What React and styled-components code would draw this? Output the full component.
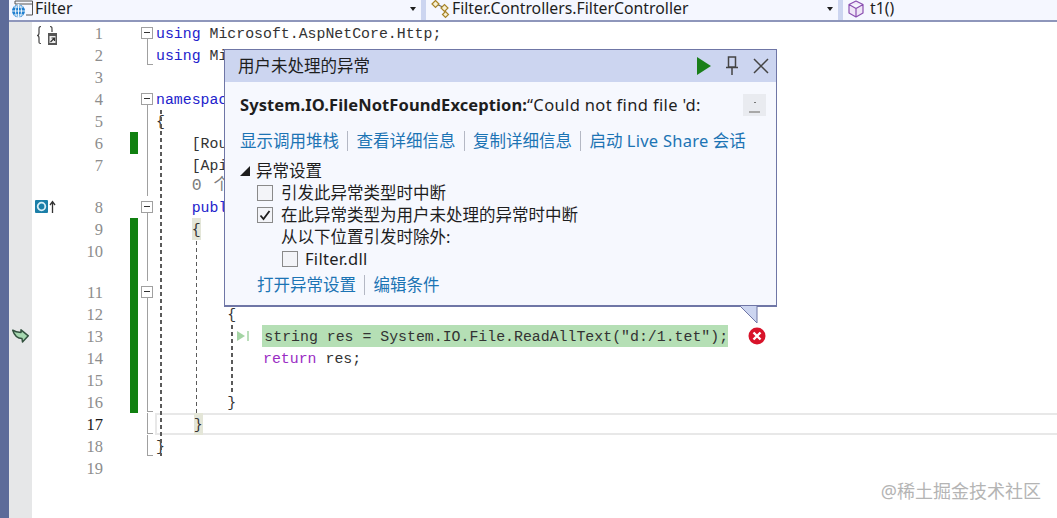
import React from "react";
import styled, { createGlobalStyle } from "styled-components";

const GlobalStyle = createGlobalStyle`
  html, body { margin: 0; padding: 0; height: 100%; background: #fff; overflow: hidden; }
  #root { height: 100%; }
`;

const UI_FONT = `"Noto Sans", "Noto Sans CJK SC", sans-serif`;
const CODE_FONT = `"Liberation Mono", "Noto Sans CJK SC", monospace`;
const CHAR = 8.92;

const Page = styled.div`
  position: relative;
  display: flex;
  width: 1057px;
  height: 518px;
  overflow: hidden;
  background: #fff;
`;
const Strip = styled.div`
  width: 9px;
  background: #5d6b99;
  flex: none;
`;
const Main = styled.div`
  flex: 1;
  display: flex;
  flex-direction: column;
  min-width: 0;
`;

const NavBar = styled.div`
  display: flex;
  flex: none;
  height: 20px;
  gap: 5px;
  background: #ccd5f0;
  border-bottom: 2px solid #8e96bb;
  overflow: hidden;
`;
const NavBox = styled.div`
  display: flex;
  align-items: center;
  width: ${(p) => p.$width}px;
  flex: none;
  height: 20px;
  background: #f5f7ff;
  font: 15.8px/16px ${UI_FONT};
  color: #1e1e1e;
  box-sizing: border-box;
  padding-left: ${(p) => p.$pad}px;
  padding-bottom: 4px;
  position: relative;
  white-space: nowrap;
`;
const NavIcon = styled.svg`
  flex: none;
  align-self: flex-start;
  margin-bottom: -4px;
  margin-right: ${(p) => p.$gap}px;
`;
const Caret = styled.i`
  position: absolute;
  right: 5px;
  top: 7px;
  border-left: 3.5px solid transparent;
  border-right: 3.5px solid transparent;
  border-top: 4px solid #1e1e1e;
`;

const Editor = styled.div`
  position: relative;
  flex: 1;
  display: flex;
  flex-direction: column;
  min-height: 0;
`;
const Row = styled.div`
  display: flex;
  flex: ${(p) => (p.$fill ? "1" : "none")};
  height: ${(p) => (p.$fill ? "auto" : `${p.$h || 22}px`)};
`;
const Margin = styled.div`
  flex: none;
  width: 23px;
  background: #e6e7e8;
  display: flex;
  align-items: center;
  justify-content: center;
`;
const Glyph = styled.div`
  flex: none;
  width: 30px;
  display: flex;
  align-items: center;
  padding-left: 3px;
  box-sizing: border-box;
`;
const LineNo = styled.div`
  flex: none;
  width: 41px;
  text-align: right;
  font: 16.5px/24px "Liberation Serif", serif;
  color: ${(p) => (p.$current ? "#1a1a1a" : "#8d8d8d")};
`;
const ChangeCol = styled.div`
  flex: none;
  width: 8px;
  margin-left: 27px;
  background: ${(p) => (p.$on ? "#108010" : "transparent")};
`;
const Fold = styled.div`
  flex: none;
  position: relative;
  width: 12px;
  margin-left: 3px;

  &::before {
    content: "";
    display: ${(p) => (p.$kind ? "block" : "none")};
    position: absolute;
    left: 6px;
    top: ${(p) => (p.$kind === "open" ? "11px" : "0")};
    bottom: ${(p) => (p.$kind === "end" ? "1px" : "0")};
    width: 1px;
    background: #a0a0a0;
    ${(p) => p.$kind === "end" && "width: 6px; background: none; border-left: 1px solid #a0a0a0; border-bottom: 1px solid #a0a0a0; box-sizing: border-box;"}
  }
`;
const FoldBox = styled.span`
  position: absolute;
  left: 0;
  top: 5px;
  width: 12px;
  height: 12px;
  box-sizing: border-box;
  background: #fff;
  border: 1px solid #a0a0a0;

  &::after {
    content: "";
    position: absolute;
    left: 2px;
    right: 2px;
    top: 4px;
    height: 1px;
    background: #333;
  }
`;
const Code = styled.div`
  flex: 1;
  min-width: 0;
  display: flex;
  align-items: flex-start;
  margin-left: ${(p) => (p.$current ? "2px" : "3px")};
  padding-left: ${(p) => p.$indent * 4 * CHAR + (p.$current ? 1 : 0)}px;
  box-sizing: border-box;
  font: 14.87px/24px ${CODE_FONT};
  color: #333;
  white-space: pre;
  ${(p) =>
    p.$current &&
    "border-top: 2px solid #e8e8e8; border-bottom: 2px solid #e8e8e8; border-left: 2px solid #e8e8e8; line-height: 20px;"}
`;
const Keyword = styled.span`
  color: ${(p) => (p.$flow ? "#9a2cc4" : "#2222cc")};
`;
const Brace = styled.span`
  display: block;
  height: 22px;
  line-height: 24px;
  margin-top: ${(p) => (p.$current ? "-2px" : "0")};
  background: #e4e6d8;
`;
const Lens = styled.span`
  font: 16.5px/19px ${CODE_FONT};
  color: #7d7d7d;
  word-spacing: 2px;
`;
const Active = styled.span`
  display: block;
  height: 22px;
  line-height: 24px;
  background: #b5dfb5;
  margin-left: -2px;
  padding-left: 2px;
`;
const RunMark = styled.svg`
  flex: none;
  align-self: center;
  width: 36px;
  height: 12px;
  margin-left: 10px;
  margin-right: -9px;
`;
const ErrorMark = styled.svg`
  flex: none;
  align-self: center;
  margin-left: 20px;
`;
const IconSvg = styled.svg`
  overflow: visible;
`;

const Guide = styled.i`
  position: absolute;
  left: ${(p) => p.$x}px;
  top: ${(p) => p.$top}px;
  height: ${(p) => p.$h}px;
  width: 1.5px;
  background: repeating-linear-gradient(#5a5a5a 0 4px, transparent 4px 7px);
`;

const Popup = styled.div`
  position: absolute;
  left: 224px;
  top: 49px;
  width: 553px;
  height: 258px;
  box-sizing: border-box;
  border: 1px solid #6f76a6;
  border-bottom-width: 2px;
  background: #f6f8fe;
  font: 16.5px/22px ${UI_FONT};
  color: #1e1e1e;
  display: flex;
  flex-direction: column;
`;
const TitleBar = styled.div`
  flex: none;
  height: 32px;
  background: #ccd5f0;
  display: flex;
  align-items: center;
  padding: 0 7px 0 13px;
  gap: 14px;
`;
const Title = styled.div`
  flex: 1;
`;
const Message = styled.div`
  display: flex;
  align-items: center;
  height: 24px;
  margin: 11px 10px 0 15px;
  justify-content: space-between;
  white-space: nowrap;
`;
const Bold = styled.b`
  font-weight: 700;
  letter-spacing: 0.1px;
`;
const Latin = styled.span`
  letter-spacing: ${(p) => p.$spacing}px;
`;
const CopyBtn = styled.div`
  width: 23px;
  height: 22px;
  background: #e9ebf0;
  position: relative;

  &::before {
    content: "";
    position: absolute;
    left: 11px;
    top: 8px;
    width: 2px;
    height: 1px;
    background: #777;
  }

  &::after {
    content: "";
    position: absolute;
    left: 6px;
    right: 6px;
    bottom: 3px;
    height: 2px;
    background: #a8a8a8;
  }
`;
const LinkRow = styled.div`
  display: flex;
  align-items: center;
  height: 22px;
  margin: ${(p) => p.$top}px 0 0 ${(p) => p.$left}px;
  color: #1c74b4;
  white-space: nowrap;
`;
const LinkItem = styled.span`
  padding-right: 8px;
  margin-right: 8.5px;
  border-right: 1px solid #b4b8c4;
  line-height: 20px;

  &:last-child {
    border-right: none;
  }
`;
const Section = styled.div`
  display: flex;
  align-items: center;
  height: 22px;
  margin: ${(p) => p.$top || 0}px 0 0 ${(p) => p.$left}px;
  white-space: nowrap;
`;
const Triangle = styled.i`
  width: 0;
  height: 0;
  margin-right: 6px;
  border-style: solid;
  border-width: 0 0 10px 10px;
  border-color: transparent transparent #1e1e1e transparent;
`;
const Box = styled.span`
  flex: none;
  width: 16px;
  height: 16px;
  box-sizing: border-box;
  margin-right: ${(p) => p.$gap}px;
  border: 1px solid #8a8a8a;
  background: #f3f4f8;
  display: flex;
  align-items: center;
  justify-content: center;
`;
const Tail = styled.svg`
  position: absolute;
  left: 739px;
  top: 306px;
`;
const Watermark = styled.div`
  position: absolute;
  right: 16px;
  bottom: 16px;
  font: 18px/22px ${UI_FONT};
  color: #b4b4b4;
  white-space: nowrap;
`;

const GlobeIcon = () => (
  <NavIcon $gap={2} width="21" height="20" viewBox="0 0 21 20">
    <path d="M3 1h17.500v14H14M3 4h17.500" fill="none" stroke="#555" strokeWidth="1" />
    <path d="M3 1v3" stroke="#555" />
    <circle cx="6.500" cy="11" r="6.500" fill="#1f7fd0" />
    <path d="M0 11h13M6.500 4.500v13M2 7h9M2 15h9" stroke="#fff" strokeWidth=".9" />
    <ellipse cx="6.500" cy="11" rx="3" ry="6.500" fill="none" stroke="#fff" strokeWidth=".9" />
  </NavIcon>
);

const ClassIcon = () => (
  <NavIcon $gap={2} width="21" height="20" viewBox="0 0 21 20">
    <path d="M7 4l9 4M16 8l1 7" fill="none" stroke="#666" strokeWidth="1.200" />
    <g fill="#f7f0d4" stroke="#a88428" strokeWidth="1.200">
      <path d="M3 4l3.500-3.500L10 4 6.500 7.500z" />
      <path d="M12 8l3.500-3.500L19 8l-3.500 3.500z" />
      <path d="M13.500 14.500l3-3 3 3-3 3z" />
    </g>
  </NavIcon>
);

const CubeIcon = () => (
  <NavIcon $gap={5} width="18" height="18" viewBox="0 0 18 18">
    <path
      d="M9 1l7 3.500v8.500l-7 4-7-4V4.500zM2 4.500l7 4 7-4M9 8.500V17"
      fill="#efe6f7"
      stroke="#8a4fb0"
      strokeWidth="1.200"
      strokeLinejoin="round"
    />
  </NavIcon>
);

const ShortcutBraces = () => (
  <IconSvg width="22" height="22" viewBox="0 0 22 22">
    <path
      d="M6 4.500C4 4.500 4 5.500 4 8v3c0 2-1 2.500-2 2.500 1 0 2 .5 2 2.500v3c0 2 0 2.500 2 2.500"
      fill="none"
      stroke="#444"
      strokeWidth="1.200"
    />
    <path d="M15 4.500c2 0 2 1 2 3.500v2" fill="none" stroke="#444" strokeWidth="1.200" />
    <rect x="13" y="11" width="9" height="12" fill="#555" />
    <rect x="14.500" y="14" width="6" height="7" fill="#eee" />
    <path d="M15.500 20l4-4M16.500 16h3v3" stroke="#333" fill="none" strokeWidth="1.200" />
  </IconSvg>
);

const TrackerIcon = () => (
  <svg width="22" height="14" viewBox="0 0 22 14">
    <rect x="0" y="0" width="13" height="13" rx="1" fill="#1c7fa8" />
    <circle cx="6.500" cy="6.500" r="3.800" fill="none" stroke="#d8eef6" strokeWidth="1.800" />
    <path d="M17.500 13V2M15 5l2.500-3.500L20 5" fill="none" stroke="#333" strokeWidth="1.300" />
  </svg>
);

const NextArrow = () => (
  <svg width="17" height="14" viewBox="0 0 17 14">
    <path
      d="M.7 1.200C3 3 6 3.500 9 3.500V.8l7.300 6L10.500 13 10 9.500C6 9.500 2.500 7 .7 1.200z"
      fill="#a6d8b0"
      stroke="#33523f"
      strokeWidth="1.500"
      strokeLinejoin="round"
    />
  </svg>
);

const rows = [
  { no: 1, fold: "open", box: true, glyph: <ShortcutBraces />, code: <><Keyword>using</Keyword> Microsoft.AspNetCore.Http;</> },
  { no: 2, fold: "end", code: <><Keyword>using</Keyword> Microsoft.AspNetCore.Mvc;</> },
  { no: 3 },
  { no: 4, fold: "open", box: true, code: <><Keyword>namespace</Keyword> Filter.Controllers</> },
  { no: 5, fold: "line", code: "{" },
  { no: 6, fold: "line", on: true, indent: 1, code: '[Route("api/[controller]")]' },
  { no: 7, fold: "line", indent: 1, code: "[ApiController]" },
  { h: 20, fold: "line", indent: 1, code: <Lens>0 个引用</Lens> },
  { no: 8, fold: "open", box: true, glyph: <TrackerIcon />, indent: 1, code: <><Keyword>public</Keyword> class FilterController</> },
  { no: 9, fold: "line", on: true, indent: 1, code: <Brace>{"{"}</Brace> },
  { no: 10, fold: "line", on: true, indent: 2, code: "[HttpGet]" },
  { h: 19, fold: "line", on: true },
  { no: 11, fold: "open", box: true, on: true, indent: 2, code: <><Keyword>public</Keyword> string t1()</> },
  { no: 12, fold: "line", on: true, indent: 2, code: "{" },
  {
    no: 13,
    fold: "line",
    on: true,
    indent: 2,
    margin: <NextArrow />,
    code: (
      <>
        <RunMark viewBox="0 0 36 12">
          <path d="M0 1l8 5-8 5z" fill="#a4d4a4" />
          <path d="M11 1v10" stroke="#a4d4a4" strokeWidth="1.500" />
        </RunMark>
        <Active>string res = System.IO.File.ReadAllText("d:/1.tet");</Active>
        <ErrorMark width="18" height="18" viewBox="0 0 18 18">
          <circle cx="9" cy="9" r="8.500" fill="#d8132a" />
          <path d="M5.500 5.500l7 7M12.500 5.500l-7 7" stroke="#fff" strokeWidth="2.400" />
        </ErrorMark>
      </>
    ),
  },
  { no: 14, fold: "line", on: true, indent: 3, code: <><Keyword $flow>return</Keyword> res;</> },
  { no: 15, fold: "line", on: true },
  { no: 16, fold: "end", on: true, indent: 2, code: "}" },
  { no: 17, fold: "end", indent: 1, current: true, code: <Brace $current>{"}"}</Brace> },
  { no: 18, fold: "end", code: "}" },
  { no: 19 },
];

export default function App() {
  return (
    <>
      <GlobalStyle />
      <Page>
        <Strip />
        <Main>
          <NavBar>
            <NavBox $width={412} $pad={3}>
              <GlobeIcon />
              Filter
              <Caret />
            </NavBox>
            <NavBox $width={412} $pad={3}>
              <ClassIcon />
              Filter.Controllers.FilterController
              <Caret />
            </NavBox>
            <NavBox $width={214} $pad={4}>
              <CubeIcon />
              t1()
            </NavBox>
          </NavBar>
          <Editor>
            {rows.map((r, i) => (
              <Row key={i} $h={r.h}>
                <Margin>{r.margin}</Margin>
                <Glyph>{r.glyph}</Glyph>
                <LineNo $current={r.current}>{r.no}</LineNo>
                <ChangeCol $on={r.on} />
                <Fold $kind={r.fold}>{r.box && <FoldBox />}</Fold>
                <Code $indent={r.indent || 0} $current={r.current}>
                  {r.code}
                </Code>
              </Row>
            ))}
            <Row $fill>
              <Margin />
            </Row>
            <Guide $x={151} $top={88} $h={346} />
            <Guide $x={186.500} $top={219} $h={172} />
            <Guide $x={222} $top={303} $h={70} />
          </Editor>
        </Main>
        <Popup>
          <TitleBar>
            <Title>用户未处理的异常</Title>
            <svg width="14" height="18" viewBox="0 0 14 18">
              <path d="M0 0l14 9-14 9z" fill="#1a7f1a" />
            </svg>
            <svg width="14" height="20" viewBox="0 0 14 20">
              <path d="M3.500 1h7v10h-7zM1 11.500h12M7 12v7" fill="none" stroke="#444" strokeWidth="1.500" />
            </svg>
            <svg width="16" height="16" viewBox="0 0 16 16">
              <path d="M1 1l14 14M15 1L1 15" stroke="#444" strokeWidth="1.500" />
            </svg>
          </TitleBar>
          <Message>
            <span>
              <Bold>System.IO.FileNotFoundException:</Bold>
              <Latin $spacing={0.35}>“Could not find file 'd:</Latin>
            </span>
            <CopyBtn />
          </Message>
          <LinkRow $top={13} $left={15}>
            <LinkItem>显示调用堆栈</LinkItem>
            <LinkItem>查看详细信息</LinkItem>
            <LinkItem>复制详细信息</LinkItem>
            <LinkItem>
              启动 <Latin $spacing={0.25}>Live Share</Latin> 会话
            </LinkItem>
          </LinkRow>
          <Section $top={8} $left={15}>
            <Triangle />
            异常设置
          </Section>
          <Section $left={32}>
            <Box $gap={8} />
            引发此异常类型时中断
          </Section>
          <Section $left={32}>
            <Box $gap={8}>
              <svg width="12" height="12" viewBox="0 0 12 12">
                <path d="M1.500 6.500L4.500 10 10.500 2" fill="none" stroke="#1e1e1e" strokeWidth="1.800" />
              </svg>
            </Box>
            在此异常类型为用户未处理的异常时中断
          </Section>
          <Section $left={56}>从以下位置引发时除外:</Section>
          <Section $left={57}>
            <Box $gap={7} />
            <Latin $spacing={0.3}>Filter.dll</Latin>
          </Section>
          <LinkRow $top={4} $left={32}>
            <LinkItem>打开异常设置</LinkItem>
            <LinkItem>编辑条件</LinkItem>
          </LinkRow>
        </Popup>
        <Tail width="20" height="20" viewBox="0 0 20 20">
          <path d="M1 0l17 17V0z" fill="#ccd5f0" />
          <path d="M1 0l17 17V0" fill="none" stroke="#6f76a6" />
        </Tail>
        <Watermark>@稀土掘金技术社区</Watermark>
      </Page>
    </>
  );
}
